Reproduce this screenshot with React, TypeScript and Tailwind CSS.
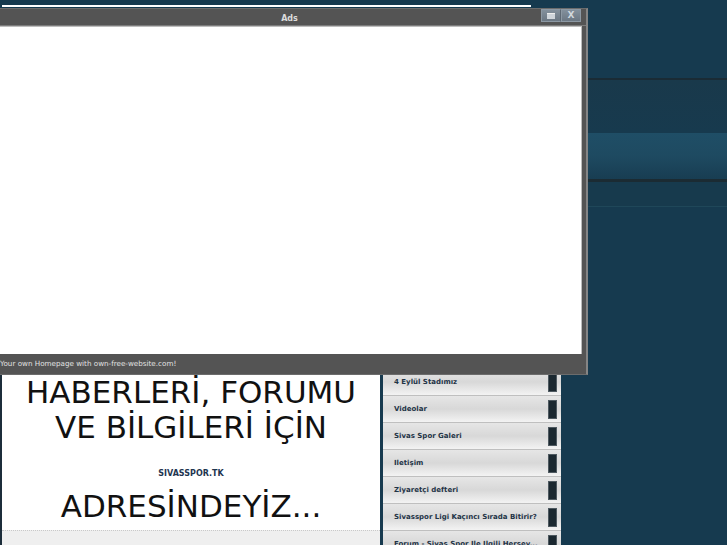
const menu = [
  "Ana Sayfa",
  "Haberler",
  "Fikstür",
  "Puan Durumu",
  "Kadro",
  "Tarihçe",
  "4 Eylül Stadımız",
  "Videolar",
  "Sivas Spor Galeri",
  "Iletişim",
  "Ziyaretçi defteri",
  "Sivasspor Ligi Kaçıncı Sırada Bitirir?",
  "Forum - Sivas Spor Ile Ilgili Hersey...",
];

function AdsWindow() {
  return (
    <div className="absolute left-[-8px] top-[8px] w-[596px] h-[367px] flex flex-col bg-[#545454] border border-[#6c6c6c] border-r-2 border-r-[#858585]">
      {/* Title bar */}
      <div className="relative h-[16px] flex items-center justify-center pt-[3px]">
        <span className="text-[8px] font-bold text-[#dcdcdc] leading-[10px]">Ads</span>
        <div className="absolute right-[5px] top-0 flex h-[13px]">
          <button className="w-[20px] h-full flex items-center justify-center bg-gradient-to-b from-[#83909c] to-[#6b7783] border border-[#8c98a3] border-r-[#5d6873]">
            <span className="block w-[8px] h-[6px] bg-[#cfd5db] border-t border-[#eeeeee]" />
          </button>
          <button className="w-[20px] h-full flex items-center justify-center bg-gradient-to-b from-[#83909c] to-[#6b7783] border border-[#8c98a3]">
            <span className="text-[9px] leading-none font-bold text-[#d2d8de]">X</span>
          </button>
        </div>
      </div>
      <div className="h-px bg-[#7c7c7c]" />

      {/* Content */}
      <div className="h-[328px] ml-[6px] mr-[4px] bg-white border-t border-r border-[#bdbdbd]" />

      {/* Footer */}
      <div className="flex-1 flex items-center pl-[7px]">
        <span className="text-[7.2px] leading-none text-[#e2e2e2]">
          Your own Homepage with own-free-website.com!
        </span>
      </div>
    </div>
  );
}

export default function App() {
  return (
    <div className="relative w-[727px] h-[545px] overflow-hidden bg-[#163a4f] font-['DejaVu_Sans',sans-serif]">
      {/* Header bands */}
      <div className="h-[78px] pt-[5px] pl-[2px]">
        <div className="w-[529px] h-[2px] bg-white" />
      </div>
      <div className="h-[2px] bg-[#1a2b35]" />
      <div className="h-[53px] bg-gradient-to-b from-[#19394b] to-[#173a4e]" />
      <div className="h-[46px] bg-gradient-to-b from-[#1f4e66] via-[#1e4a61] to-[#183d52]" />
      <div className="h-[3px] bg-[#1b2b33]" />
      <div className="h-[24px] bg-[#173a4d]" />
      <div className="h-px bg-[#1f4759]" />

      {/* Main */}
      <div className="flex h-[338px]">
        <div className="w-[380px] flex flex-col bg-white border-l-2 border-[#1c2d3a]">
          <div className="pt-[168px] text-center text-[31px] leading-[35px] text-[#111]">
            HABERLERİ, FORUMU
            <br />
            VE BİLGİLERİ İÇİN
          </div>
          <div className="mt-[24px] text-center text-[8px] leading-[10px] font-bold text-[#1e3550]">
            SIVASSPOR.TK
          </div>
          <div className="mt-[10px] text-center text-[31px] leading-[35px] text-[#111]">
            ADRESİNDEYİZ...
          </div>
          <div className="flex-1 mt-[6px] bg-[#efefef] border-t border-dotted border-[#c9c9c9]" />
        </div>

        <div className="w-[181px] flex flex-col border-l-[3px] border-[#173a4f] overflow-hidden">
          {menu.map((item) => (
            <div
              key={item}
              className="h-[27px] shrink-0 flex pl-[11px] pr-[4px] bg-gradient-to-b from-[#e6e6e6] via-[#d8d8d8] to-[#f3f3f3] border-b border-[#bfbfbf]"
            >
              <span className="self-center text-[7px] font-bold text-[#1f3447] whitespace-nowrap">
                {item}
              </span>
              <div className="ml-auto mt-[4px] mb-[3px] w-[9px] shrink-0 bg-[#1b2830] border border-[#4e5960]" />
            </div>
          ))}
        </div>
      </div>

      <AdsWindow />
    </div>
  );
}
